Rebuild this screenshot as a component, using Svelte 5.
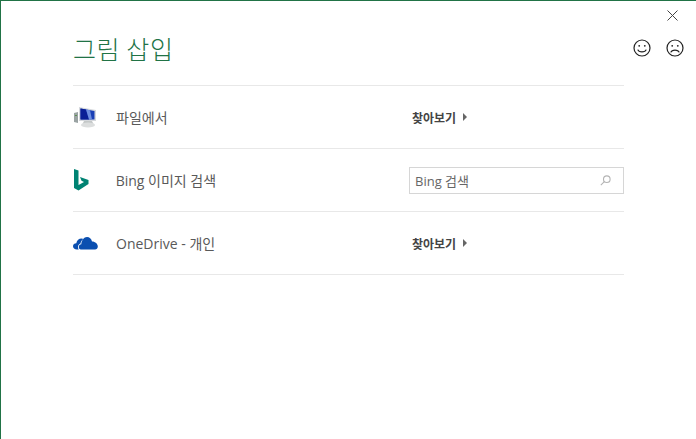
<script>
  const sources = [
    { id: "file", label: "파일에서", action: "browse" },
    { id: "bing", label: "Bing 이미지 검색", action: "search" },
    { id: "onedrive", label: "OneDrive - 개인", action: "browse" },
  ];
</script>

<div class="dialog">
  <button class="close" aria-label="닫기">
    <svg width="11" height="11" viewBox="0 0 11 11"><path d="M0.5 0.5L10.5 10.5M10.5 0.5L0.5 10.5" stroke="#444" stroke-width="1" fill="none" /></svg>
  </button>

  <header>
    <h1>그림 삽입</h1>
    <div class="faces">
      <svg width="18" height="18" viewBox="0 0 18 18" fill="none" stroke="#222" stroke-width="1.2">
        <circle cx="9" cy="9" r="8" />
        <circle cx="6.2" cy="6.8" r="0.9" fill="#222" stroke="none" />
        <circle cx="11.8" cy="6.8" r="0.9" fill="#222" stroke="none" />
        <path d="M4.8 10.6C6 13.6 12 13.6 13.2 10.6" />
      </svg>
      <svg width="18" height="18" viewBox="0 0 18 18" fill="none" stroke="#222" stroke-width="1.2">
        <circle cx="9" cy="9" r="8" />
        <circle cx="6.2" cy="6.8" r="0.9" fill="#222" stroke="none" />
        <circle cx="11.8" cy="6.8" r="0.9" fill="#222" stroke="none" />
        <path d="M4.8 13.4C6 10.4 12 10.4 13.2 13.4" />
      </svg>
    </div>
  </header>

  <div class="list">
    {#each sources as s}
      <div class="row">
        <div class="icon">
          {#if s.id === "file"}
            <svg width="24" height="22" viewBox="0 0 24 22">
              <path d="M1 7L5 6V17L1 16Z" fill="#9aa3a3" />
              <path d="M2 9H4V10H2Z" fill="#5b8f4e" />
              <path d="M6 1L23 4V15L6 15Z" fill="#d5d8dc" />
              <path d="M7.500 2.500L21.500 5V13.500L7.500 13.500Z" fill="#1a3fb5" />
              <path d="M7.500 2.500L13 3.500L16 13.500H7.500Z" fill="#0a1f96" />
              <path d="M13 3.500L17 4.200L19 13.500H16Z" fill="#6f8fe0" />
              <path d="M11 15H19L21 19H9Z" fill="#c4c8c8" />
              <ellipse cx="15" cy="19" rx="7" ry="2.500" fill="#dcdede" />
            </svg>
          {:else if s.id === "bing"}
            <svg width="16" height="22" viewBox="0 0 16 22">
              <path d="M1 0L5.500 1.600V16L11 13L8.500 11.800L7 8L15.500 11V15L5.500 21.500L1 19Z" fill="#008373" />
            </svg>
          {:else}
            <svg width="25" height="14" viewBox="0 0 25 14">
              <path d="M4 13.500C1.500 13.500 0 12 0 10.300C0 8.500 1.500 7.300 3.300 7.300C3.800 4.500 6 2.500 8.500 2.500C9.300 2.500 10 2.700 10.600 3C9 3.800 7.800 5.500 7.500 7.500C6 8 4.800 9.500 5 11.500C5 12.300 5.300 13 5.800 13.500Z" fill="#0b4fb0" />
              <path d="M8 13.500C6.500 13.500 5.800 12.300 5.800 11C5.800 9.500 6.900 8.400 8.300 8.300C8.500 4.300 11 1 14 1C16.500 1 18.300 2.700 19 5.500C22.300 5.500 24.800 8 24.800 10.500C24.800 12.500 23.500 13.500 22 13.500Z" fill="#0b4fb0" />
            </svg>
          {/if}
        </div>
        <div class="label">{s.label}</div>
        {#if s.action === "browse"}
          <div class="browse">찾아보기<span class="arrow"></span></div>
        {:else}
          <div class="search">
            <span>Bing 검색</span>
            <svg width="11" height="11" viewBox="0 0 11 11" fill="none" stroke="#b4b4b4" stroke-width="1.100">
              <circle cx="6.800" cy="4.200" r="3.300" />
              <path d="M4.300 6.700L0.800 10.200" />
            </svg>
          </div>
        {/if}
      </div>
    {/each}
  </div>
</div>

<style>
  :global(body) {
    background: #fff;
  }

  .dialog {
    position: relative;
    box-sizing: border-box;
    width: 696px;
    height: 439px;
    overflow: hidden;
    background: #fff;
    border-top: 1px solid #217346;
    border-left: 1px solid #217346;
    padding: 0 72px;
    font-family: "Noto Sans CJK KR", "Noto Sans", sans-serif;
  }

  .close {
    position: absolute;
    top: 9px;
    right: 18px;
    width: 11px;
    height: 11px;
    padding: 0;
    border: 0;
    background: none;
    display: flex;
  }

  header {
    height: 84px;
    display: flex;
    align-items: flex-start;
    position: relative;
  }

  h1 {
    margin: 29px 0 0;
    font-size: 25px;
    line-height: 36px;
    font-weight: 300;
    letter-spacing: 0.6px;
    color: #217346;
  }

  .faces {
    position: absolute;
    top: 38px;
    left: 560px;
    display: flex;
    gap: 15px;
  }

  .list {
    width: 551px;
    border-top: 1px solid #e8e8e8;
  }

  .row {
    height: 62px;
    border-bottom: 1px solid #e8e8e8;
    display: flex;
    align-items: center;
  }

  .icon {
    width: 43px;
    display: flex;
    align-items: center;
  }

  .label {
    width: 296px;
    font-size: 14px;
    color: #595959;
    font-family: "Open Sans", "Noto Sans CJK KR", sans-serif;
  }

  .browse {
    display: flex;
    align-items: center;
    font-size: 12px;
    font-weight: 700;
    color: #444;
  }

  .arrow {
    margin-left: 7px;
    border-left: 4px solid #666;
    border-top: 4px solid transparent;
    border-bottom: 4px solid transparent;
  }

  .search {
    box-sizing: border-box;
    flex: none;
    width: 215px;
    height: 27px;
    border: 1px solid #d6d6d6;
    padding: 0 12px 0 5px;
    display: flex;
    align-items: center;
    justify-content: space-between;
    font-size: 13px;
    color: #666;
    font-family: "Open Sans", "Noto Sans CJK KR", sans-serif;
  }
</style>
